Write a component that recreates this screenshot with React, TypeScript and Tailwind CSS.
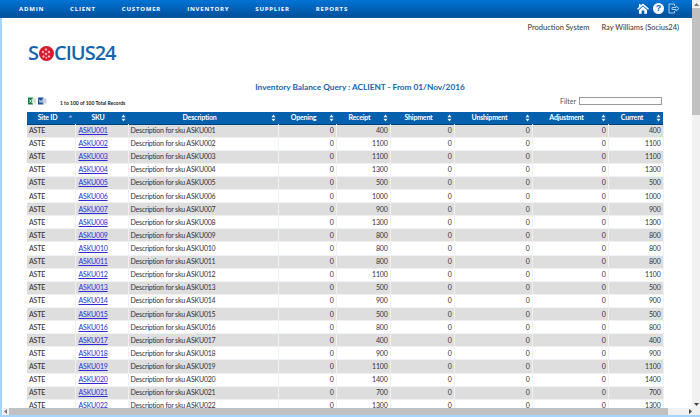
const menu = ['ADMIN', 'CLIENT', 'CUSTOMER', 'INVENTORY', 'SUPPLIER', 'REPORTS'];

const qty = [400, 1100, 1100, 1300, 500, 1000, 900, 1300, 800, 800, 800, 1100, 500, 900, 500, 800, 400, 900, 1100, 1400, 700, 1300];

const columns = [
  { label: 'Site ID', width: 48 },
  { label: 'SKU', width: 53 },
  { label: 'Description', width: 150 },
  { label: 'Opening', width: 58 },
  { label: 'Receipt', width: 54 },
  { label: 'Shipment', width: 64 },
  { label: 'Unshipment', width: 78 },
  { label: 'Adjustment', width: 76 },
  { label: 'Current', width: 55 },
];

function SortIcon({ active }: { active?: boolean }) {
  if (active) {
    return (
      <svg className="w-[5px] h-[8px] shrink-0 mr-[2px]" viewBox="0 0 5 8">
        <path d="M2.5 1 L4.5 3.5 H0.5 Z" fill="#a9a4e6" />
      </svg>
    );
  }
  return (
    <svg className="w-[5px] h-[8px] shrink-0 mr-[2px]" viewBox="0 0 5 8">
      <path d="M2.5 0.5 L4.5 3.3 H0.5 Z M2.5 7.5 L4.5 4.7 H0.5 Z" fill="#e8f0fa" />
    </svg>
  );
}

function Logo() {
  return (
    <div className="flex items-center h-[18px] text-[#1565ad] text-[20px] leading-none font-semibold font-['Open_Sans',sans-serif] tracking-[-1px]">
      <span>S</span>
      <svg className="w-[15px] h-[15px] mx-[0.5px]" viewBox="0 0 15 15">
        <circle cx="7.5" cy="7.5" r="7.5" fill="#d9182d" />
        <g fill="#f4b7bd">
          <rect x="3" y="5" width="2" height="2" transform="rotate(45 4 6)" />
          <rect x="6" y="2.5" width="2" height="2" transform="rotate(45 7 3.5)" />
          <rect x="9" y="5" width="2" height="2" transform="rotate(45 10 6)" />
          <rect x="6" y="7" width="2" height="2" transform="rotate(45 7 8)" />
          <rect x="3.5" y="9.5" width="2" height="2" transform="rotate(45 4.5 10.5)" />
          <rect x="9" y="9.5" width="2" height="2" transform="rotate(45 10 10.5)" />
          <rect x="6.5" y="11" width="1.6" height="1.6" transform="rotate(45 7.3 11.8)" />
        </g>
      </svg>
      <span>CIUS24</span>
    </div>
  );
}

function Navbar() {
  return (
    <div className="h-[18px] shrink-0 flex items-center justify-between bg-gradient-to-b from-[#0074d6] to-[#00509c] border-b border-[#0a5a9e]">
      <div className="flex gap-[26px] pl-[19px] pt-[1px] text-white text-[6px] font-bold tracking-[0.8px] font-['Open_Sans',sans-serif]">
        {menu.map((m) => (
          <span key={m}>{m}</span>
        ))}
      </div>
      <div className="flex items-center gap-[4px] pr-[12px]">
        <svg className="w-[12px] h-[11px]" viewBox="0 0 12 11">
          <path d="M6 0.5 L12 5.8 L11 6.8 L6 2.4 L1 6.8 L0 5.8 L2 4 V1 H3.6 V2.6 Z M6 3.4 L10 6.9 V10.8 H7.3 V7.6 H4.7 V10.8 H2 V6.9 Z" fill="#fff" />
        </svg>
        <div className="w-[11px] h-[11px] rounded-full bg-white flex items-center justify-center text-[#0063b8] text-[9px] font-bold leading-none font-['Liberation_Sans',sans-serif]">
          ?
        </div>
        <svg className="w-[12px] h-[11px]" viewBox="0 0 12 11" fill="none" stroke="#a9cdf0" strokeWidth="1">
          <path d="M6.5 3 V1 H1 V10 H6.5 V8" />
          <path d="M4 4.5 H8 V3 L11 5.5 L8 8 V6.5 H4 Z" />
        </svg>
      </div>
    </div>
  );
}

function ExportIcons() {
  return (
    <div className="flex gap-[2px]">
      <svg className="w-[8px] h-[8px]" viewBox="0 0 8 8">
        <rect x="0" y="0.5" width="5" height="7" fill="#1e7a45" />
        <rect x="4" y="1.5" width="4" height="5" fill="#cfe5d6" />
        <path d="M1.5 2.5 L3.5 5.5 M3.5 2.5 L1.5 5.5" stroke="#fff" strokeWidth="0.8" />
      </svg>
      <svg className="w-[9px] h-[8px]" viewBox="0 0 9 8">
        <rect x="0" y="0.5" width="5.5" height="7" fill="#1f4e97" />
        <rect x="4.5" y="1.5" width="4" height="5" fill="#c5cfe2" />
        <path d="M1.2 2.5 L2 5.5 L2.8 3.5 L3.6 5.5 L4.4 2.5" stroke="#fff" strokeWidth="0.6" fill="none" />
      </svg>
    </div>
  );
}

function InventoryTable() {
  return (
    <table className="w-[636px] table-fixed border-collapse text-[7px] tracking-[-0.2px] text-[#333] font-['Lato',sans-serif]">
      <colgroup>
        {columns.map((c) => (
          <col key={c.label} style={{ width: c.width }} />
        ))}
      </colgroup>
      <thead>
        <tr className="h-[12px] bg-[#0560ae] text-white border-b border-[#03417c]">
          {columns.map((c, i) => (
            <th key={c.label} className="p-0 font-bold">
              <div className="flex items-center">
                <span className="flex-1 text-center leading-[11px]">{c.label}</span>
                <SortIcon active={i === 0} />
              </div>
            </th>
          ))}
        </tr>
      </thead>
      <tbody>
        {qty.map((q, i) => {
          const n = String(i + 1).padStart(3, '0');
          const odd = i % 2 === 0;
          const cell = `p-0 leading-none border-r border-b ${odd ? 'bg-[#dedede] border-[#f0f0f0]' : 'bg-white border-[#eef3fa]'}`;
          return (
            <tr key={n} className="h-[13.11px]">
              <td className={`${cell} pl-[2px] font-medium ${odd ? 'bg-[#d9d9d9]' : 'bg-[#f7f7f7]'}`}>ASTE</td>
              <td className={`${cell} pl-[3px]`}>
                <a href="#" className="text-[#2b2bd8] underline">ASKU{n}</a>
              </td>
              <td className={`${cell} pl-[2px]`}>Description for sku ASKU{n}</td>
              <td className={`${cell} text-right pr-[2px]`}>0</td>
              <td className={`${cell} text-right pr-[2px]`}>{q}</td>
              <td className={`${cell} text-right pr-[2px]`}>0</td>
              <td className={`${cell} text-right pr-[2px]`}>0</td>
              <td className={`${cell} text-right pr-[2px]`}>0</td>
              <td className={`${cell} text-right pr-[2px]`}>{q}</td>
            </tr>
          );
        })}
      </tbody>
    </table>
  );
}

export default function App() {
  return (
    <div className="w-[700px] h-[417px] overflow-hidden flex flex-col bg-white font-['Lato',sans-serif]">
      <div className="flex-1 min-h-0 flex">
        <div className="flex-1 min-w-0 flex flex-col">
          <Navbar />
          <div className="flex-1 min-h-0 overflow-hidden border-l-2 border-[#a6d6ff] pl-[25px] bg-white">
            <div className="flex justify-end gap-[12px] pr-[13px] pt-[4px] h-[26px] text-[7.5px] text-[#333]">
              <span>Production System</span>
              <span>Ray Williams (Socius24)</span>
            </div>
            <div className="pl-[1px]">
              <Logo />
            </div>
            <div className="mt-[19px] pl-[1px] w-[665px] text-center text-[8.25px] leading-[12px] font-bold text-[#1565ad]">
              Inventory Balance Query : ACLIENT - From 01/Nov/2016
            </div>
            <div className="w-[636px] h-[19px] flex items-start">
              <div className="pt-[4px] pl-[1px] w-[33px]">
                <ExportIcons />
              </div>
              <span className="pt-[7px] text-[5px] font-bold text-[#222] leading-[7px]">1 to 100 of 100 Total Records</span>
              <div className="ml-auto flex items-center gap-[3px] pr-[1px] pt-[4px]">
                <span className="text-[7px] text-[#555] leading-[8px]">Filter</span>
                <div className="w-[83px] h-[8px] bg-white border border-[#9a9a9a]" />
              </div>
            </div>
            <InventoryTable />
          </div>
        </div>
        <div className="w-[8px] shrink-0 flex flex-col bg-[#f1f1f1]">
          <div className="h-[8px] flex items-center justify-center">
            <svg className="w-[5px] h-[3px]" viewBox="0 0 5 3"><path d="M2.5 0 L5 3 H0 Z" fill="#777" /></svg>
          </div>
          <div className="h-[107px] bg-[#c1c1c1]" />
          <div className="flex-1" />
          <div className="h-[8px] flex items-center justify-center">
            <svg className="w-[5px] h-[3px]" viewBox="0 0 5 3"><path d="M0 0 H5 L2.5 3 Z" fill="#444" /></svg>
          </div>
        </div>
      </div>
      <div className="h-[7px] shrink-0 flex items-center border-l-2 border-[#a6d6ff] bg-[#f1f1f1]">
        <div className="w-[7px] flex justify-center">
          <svg className="w-[3px] h-[5px]" viewBox="0 0 3 5"><path d="M3 0 V5 L0 2.5 Z" fill="#777" /></svg>
        </div>
        <div className="w-[659px] h-full bg-[#c1c1c1]" />
        <div className="flex-1" />
        <div className="w-[20px] flex justify-center">
          <svg className="w-[3px] h-[5px]" viewBox="0 0 3 5"><path d="M0 0 V5 L3 2.5 Z" fill="#444" /></svg>
        </div>
      </div>
      <div className="h-[2px] shrink-0 bg-[#a6d6ff]" />
    </div>
  );
}
